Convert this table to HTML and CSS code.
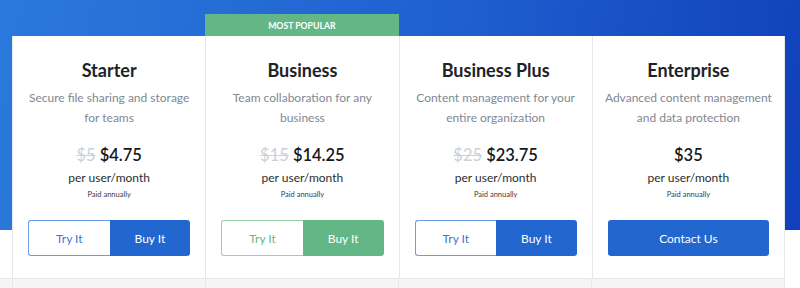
FILE: index.html
```html
<!DOCTYPE html>
<html>
<head>
<meta charset="utf-8">
<link rel="stylesheet" href="styles.css">
</head>
<body>
<div class="page">
  <div class="plans">
    <div class="plan">
      <div class="badge-slot"></div>
      <div class="card">
        <h2 class="title">Starter</h2>
        <p class="desc">Secure file sharing and storage for teams</p>
        <div class="price"><s class="old">$5</s> $4.75</div>
        <div class="per">per user/month</div>
        <div class="paid">Paid annually</div>
        <div class="actions">
          <a class="btn try">Try It</a>
          <a class="btn buy">Buy It</a>
        </div>
      </div>
    </div>
    <div class="plan popular">
      <div class="badge-slot"><span class="badge">MOST POPULAR</span></div>
      <div class="card">
        <h2 class="title">Business</h2>
        <p class="desc">Team collaboration for any business</p>
        <div class="price"><s class="old">$15</s> $14.25</div>
        <div class="per">per user/month</div>
        <div class="paid">Paid annually</div>
        <div class="actions">
          <a class="btn try">Try It</a>
          <a class="btn buy">Buy It</a>
        </div>
      </div>
    </div>
    <div class="plan">
      <div class="badge-slot"></div>
      <div class="card">
        <h2 class="title">Business Plus</h2>
        <p class="desc">Content management for your entire organization</p>
        <div class="price"><s class="old">$25</s> $23.75</div>
        <div class="per">per user/month</div>
        <div class="paid">Paid annually</div>
        <div class="actions">
          <a class="btn try">Try It</a>
          <a class="btn buy">Buy It</a>
        </div>
      </div>
    </div>
    <div class="plan last">
      <div class="badge-slot"></div>
      <div class="card">
        <h2 class="title">Enterprise</h2>
        <p class="desc">Advanced content management and data protection</p>
        <div class="price">$35</div>
        <div class="per">per user/month</div>
        <div class="paid">Paid annually</div>
        <div class="actions">
          <a class="btn buy full">Contact Us</a>
        </div>
      </div>
    </div>
  </div>
  <div class="features">
    <div class="fcell lead"></div>
    <div class="fcell"></div>
    <div class="fcell"></div>
    <div class="fcell"></div>
    <div class="fcell last"></div>
  </div>
</div>
</body>
</html>
```
FILE: styles.css
```css
html, body {
  margin: 0;
  padding: 0;
  background: #ffffff;
}
body {
  font-family: Lato, "Open Sans", sans-serif;
  width: 800px;
  height: 288px;
  overflow: hidden;
}
.page {
  background: linear-gradient(100deg, #2b79dd 0%, #1f5fcf 55%, #1040bb 100%) no-repeat;
  background-size: 100% 230px;
  height: 288px;
}
.plans {
  display: grid;
  grid-template-columns: repeat(4, 1fr);
  width: 773px;
  margin-left: 12px;
  padding-top: 14px;
}
.plan {
  display: flex;
  flex-direction: column;
}
.badge-slot {
  height: 22px;
  display: flex;
}
.badge {
  flex: 1;
  background: #63b685;
  color: #ffffff;
  font-size: 8.7px;
  font-weight: 700;
  display: flex;
  align-items: center;
  justify-content: center;
}
.card {
  background: #ffffff;
  border-left: 1px solid #e6e7e9;
  padding: 22px 15px 22px 15px;
  text-align: center;
}
.plan.last .card {
  border-right: 1px solid #e6e7e9;
}
.title {
  margin: 0;
  font-size: 18px;
  line-height: 24px;
  font-weight: 700;
  color: #1d2227;
}
.desc {
  margin: 6px -8px 0;
  font-size: 12px;
  line-height: 20px;
  height: 40px;
  color: #7f8893;
}
.price {
  margin-top: 16px;
  font-size: 16.5px;
  line-height: 22px;
  font-weight: 600;
  color: #16191d;
}
.old {
  color: #c9d1da;
  font-weight: 400;
}
.per {
  margin-top: 4px;
  font-size: 12px;
  line-height: 16px;
  color: #2a2e33;
}
.paid {
  margin-top: 4px;
  font-size: 7.5px;
  line-height: 10px;
  color: #3a3d41;
}
.actions {
  margin-top: 20px;
  display: flex;
  height: 36px;
}
.btn {
  flex: 1;
  display: flex;
  align-items: center;
  justify-content: center;
  font-size: 12px;
  box-sizing: border-box;
}
.try {
  background: #ffffff;
  color: #3b76d6;
  border: 1px solid #6a9be4;
  border-right: none;
  border-radius: 3px 0 0 3px;
}
.buy {
  background: #2266d0;
  color: #ffffff;
  border-radius: 0 3px 3px 0;
}
.buy.full {
  border-radius: 3px;
}
.popular .try {
  color: #66b887;
  border-color: #93d2ac;
}
.popular .buy {
  background: #63b685;
}
.features {
  display: flex;
  width: 785px;
  height: 10px;
  background: #f4f5f7;
  border-top: 1px solid #e6e7e9;
}
.fcell {
  flex: 1;
  border-left: 1px solid #e6e7e9;
}
.fcell.lead {
  flex: 0 0 12px;
  border-left: none;
}
.fcell.last {
  border-right: 1px solid #e6e7e9;
}
```
